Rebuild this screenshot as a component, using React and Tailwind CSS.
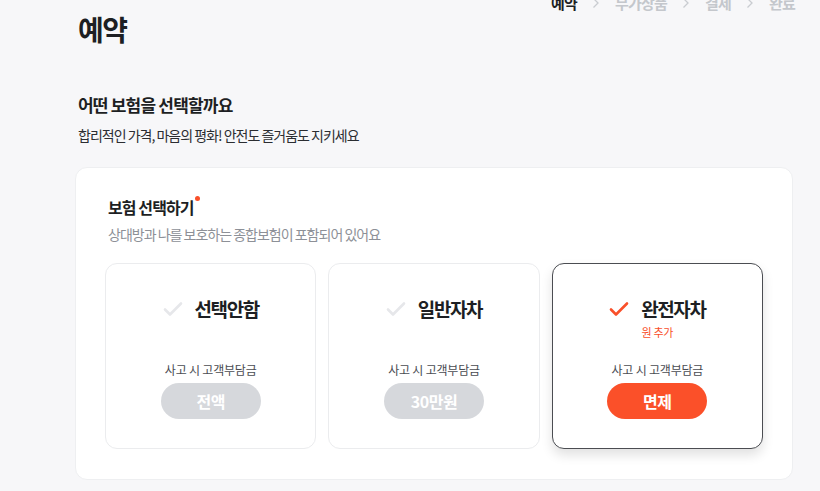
const options = [
  { id: "none", title: "선택안함", extra: null, amount: "전액" },
  { id: "basic", title: "일반자차", extra: null, amount: "30만원" },
  { id: "full", title: "완전자차", extra: "원 추가", amount: "면제" },
];

const CheckIcon = ({ active }) => (
  <svg
    width="20"
    height="16"
    viewBox="0 0 20 16"
    fill="none"
    className={active ? "text-[#f9502a]" : "text-[#e6e7ea]"}
  >
    <path
      d="M2 8.5l5 5L18 2.5"
      stroke="currentColor"
      strokeWidth="2.6"
      strokeLinecap="round"
      strokeLinejoin="round"
    />
  </svg>
);

const Chevron = () => (
  <svg width="8" height="12" viewBox="0 0 8 12" fill="none" className="text-[#c9ccd1]">
    <path d="M1.5 1.5l4.5 4.5-4.5 4.5" stroke="currentColor" strokeWidth="1.3" />
  </svg>
);

export default function App() {
  const selected = "full";
  const steps = ["예약", "부가상품", "결제", "완료"];

  return (
    <div
      className="min-h-screen bg-[#f7f7f9] text-[#1d1f23] overflow-hidden"
      style={{ fontFamily: '"Noto Sans CJK KR", "Noto Sans", sans-serif' }}
    >
      <div className="ml-[75px] w-[718px]">
        {/* Header */}
        <div className="flex justify-between items-start">
          <h1 className="ml-[3px] mt-[9px] text-[28px] font-bold tracking-[-1.5px] leading-[40px]">예약</h1>
          <div className="flex items-center gap-[15px] -mt-[7px] mr-[-2px] text-[15px] font-bold tracking-[-0.8px] leading-[20px]">
            {steps.map((s, i) => (
              <div key={s} className="flex items-center gap-[15px]">
                {i > 0 && <Chevron />}
                <span className={i === 0 ? "text-[#1d1f23]" : "text-[#c4c7cc]"}>{s}</span>
              </div>
            ))}
          </div>
        </div>

        {/* Section title */}
        <div className="ml-[3px] mt-[44px]">
          <h2 className="text-[17px] font-bold tracking-[-0.8px] leading-[24px]">어떤 보험을 선택할까요</h2>
          <p className="mt-[8px] text-[14px] tracking-[-1px] leading-[20px] text-[#2b2d31]">
            합리적인 가격, 마음의 평화! 안전도 즐거움도 지키세요
          </p>
        </div>

        {/* Panel */}
        <div className="mt-[22px] bg-white border border-[#eeeff1] rounded-[12px] px-[29px] pt-[27px] pb-[30px]">
          <div className="ml-[3px]">
            <div className="flex items-start">
              <h3 className="text-[16px] font-bold tracking-[-0.9px] leading-[24px]">보험 선택하기</h3>
              <span className="ml-[1px] mt-[1px] w-[5px] h-[5px] rounded-full bg-[#f9502a]" />
            </div>
            <p className="mt-[5px] text-[14px] tracking-[-1px] leading-[20px] text-[#8d9097]">
              상대방과 나를 보호하는 종합보험이 포함되어 있어요
            </p>
          </div>

          <div className="mt-[19px] grid grid-cols-3 gap-[12px]">
            {options.map((o) => {
              const active = o.id === selected;
              return (
                <div
                  key={o.id}
                  className={`h-[186px] rounded-[12px] bg-white flex flex-col items-center pt-[32px] ${
                    active
                      ? "border border-[#4b4d52] shadow-[0_6px_12px_rgba(0,0,0,0.12)]"
                      : "border border-[#ebecee]"
                  }`}
                >
                  <div className="flex items-center gap-[12px] h-[26px]">
                    <CheckIcon active={active} />
                    <span className="text-[19px] font-bold tracking-[-1.4px] leading-[26px]">{o.title}</span>
                  </div>
                  <div className="h-[21px] pt-[2px] text-[11px] leading-[16px] text-[#f9502a] tracking-[-0.3px]">
                    {o.extra}
                  </div>
                  <div className="mt-[19px] text-[12px] leading-[16px] tracking-[-0.2px] text-[#4a4c52]">
                    사고 시 고객부담금
                  </div>
                  <div
                    className={`mt-[5px] w-[100px] h-[36px] rounded-full flex items-center justify-center text-white text-[16px] font-bold tracking-[-0.5px] ${
                      active ? "bg-[#fb5029]" : "bg-[#d6d8dc]"
                    }`}
                  >
                    {o.amount}
                  </div>
                </div>
              );
            })}
          </div>
        </div>
      </div>
    </div>
  );
}
